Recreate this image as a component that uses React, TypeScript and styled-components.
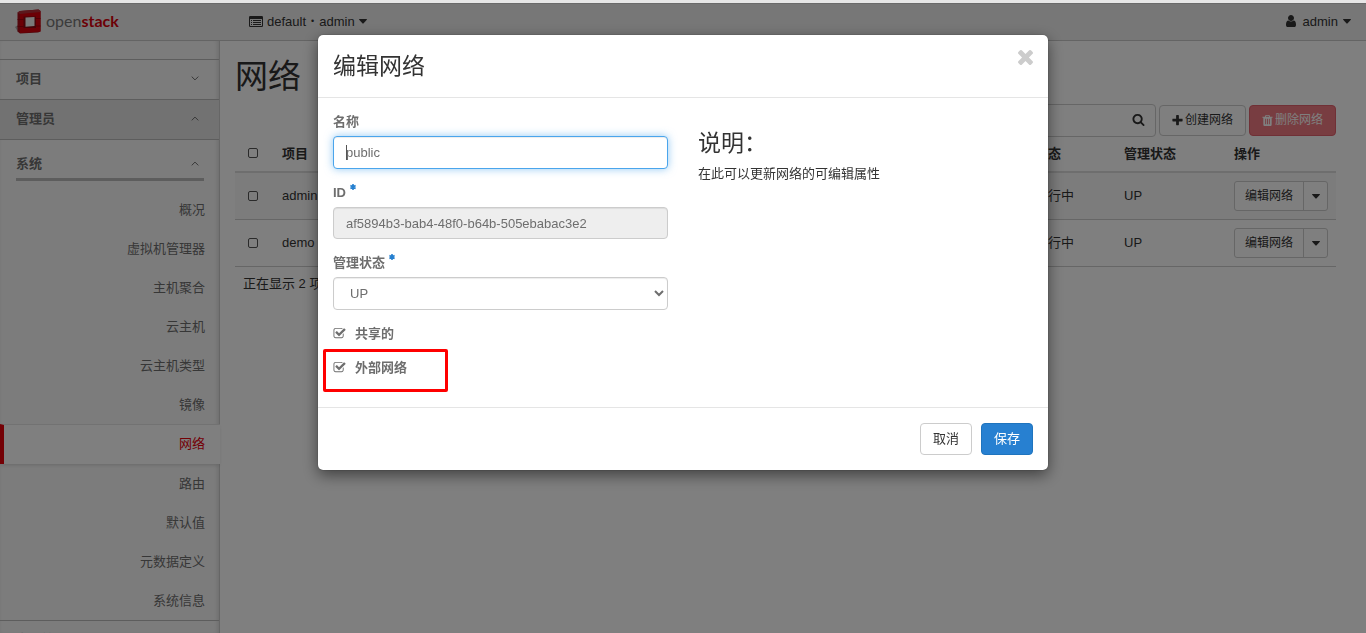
import React from 'react';
import styled, { createGlobalStyle, css } from 'styled-components';

const GlobalStyle = createGlobalStyle`
  *, *::before, *::after { box-sizing: border-box; }
  html, body { margin: 0; padding: 0; }
  body {
    overflow: hidden;
    background: #fff;
    color: #333;
    font-family: "Liberation Sans", "Noto Sans CJK SC", sans-serif;
    font-size: 13px;
    line-height: 19px;
  }
  button, input, select { font: inherit; color: inherit; }
  h1, h2, h3, p, ul { margin: 0; padding: 0; font-weight: 400; }
  ul { list-style: none; }
  a { color: inherit; text-decoration: none; }
`;

/* ---------- icons ---------- */

const glyphs = {
  check:
    'M1472 930v318q0 119-84.5 203.5t-203.5 84.5h-832q-119 0-203.5-84.5t-84.5-203.5v-832q0-119 84.5-203.5t203.5-84.5h832q63 0 117 25 15 7 18 23 3 17-9 29l-49 49q-10 10-23 10-3 0-9-2-23-6-45-6h-832q-66 0-113 47t-47 113v832q0 66 47 113t113 47h832q66 0 113-47t47-113v-254q0-13 9-22l64-64q10-10 23-10 6 0 12 3 20 8 20 29zm231-489l-814 814q-24 24-57 24t-57-24l-430-430q-24-24-24-57t24-57l110-110q24-24 57-24t57 24l263 263 647-647q24-24 57-24t57 24l110 110q24 24 24 57t-24 57z',
  times:
    'M1490 1322q0 40-28 68l-136 136q-28 28-68 28t-68-28l-294-294-294 294q-28 28-68 28t-68-28l-136-136q-28-28-28-68t28-68l294-294-294-294q-28-28-28-68t28-68l136-136q28-28 68-28t68 28l294 294 294-294q28-28 68-28t68 28l136 136q28 28 28 68t-28 68l-294 294 294 294q28 28 28 68z',
  search:
    'M1216 832q0-185-131.5-316.5t-316.5-131.5-316.5 131.5-131.5 316.5 131.5 316.5 316.5 131.5 316.5-131.5 131.5-316.5zm512 832q0 52-38 90t-90 38q-54 0-90-38l-343-342q-179 124-399 124-143 0-273.5-55.5t-225-150-150-225-55.5-273.5 55.5-273.5 150-225 225-150 273.5-55.5 273.5 55.5 225 150 150 225 55.5 273.5q0 220-124 399l343 343q37 37 37 90z',
  plus:
    'M1600 736v192q0 40-28 68t-68 28h-416v416q0 40-28 68t-68 28h-192q-40 0-68-28t-28-68v-416h-416q-40 0-68-28t-28-68v-192q0-40 28-68t68-28h416v-416q0-40 28-68t68-28h192q40 0 68 28t28 68v416h416q40 0 68 28t28 68z',
  user:
    'M1536 1399q0 109-62.5 187t-150.5 78h-854q-88 0-150.5-78t-62.5-187q0-85 8.5-160.5t31.5-152 58.5-131 94-89 134.5-34.5q131 128 313 128t313-128q76 0 134.5 34.5t94 89 58.5 131 31.5 152 8.5 160.5zm-256-887q0 159-112.5 271.5t-271.5 112.5-271.5-112.5-112.5-271.5 112.5-271.5 271.5-112.5 271.5 112.5 112.5 271.5z',
  trash:
    'M704 1376v-704q0-14-9-23t-23-9h-64q-14 0-23 9t-9 23v704q0 14 9 23t23 9h64q14 0 23-9t9-23zm256 0v-704q0-14-9-23t-23-9h-64q-14 0-23 9t-9 23v704q0 14 9 23t23 9h64q14 0 23-9t9-23zm256 0v-704q0-14-9-23t-23-9h-64q-14 0-23 9t-9 23v704q0 14 9 23t23 9h64q14 0 23-9t9-23zm-544-992h448l-48-117q-7-9-17-11h-317q-10 2-17 11zm928 32v64q0 14-9 23t-23 9h-96v948q0 83-47 143.5t-113 60.5h-832q-66 0-113-58.5t-47-141.5v-952h-96q-14 0-23-9t-9-23v-64q0-14 9-23t23-9h309l70-167q15-37 54-63t79-26h320q40 0 79 26t54 63l70 167h309q14 0 23 9t9 23z',
};

const Svg = styled.svg`
  display: block;
  flex: none;
  fill: currentColor;
`;

const Glyph = ({
  name,
  size = 13,
  box = '0 0 1792 1792',
}: {
  name: keyof typeof glyphs;
  size?: number;
  box?: string;
}) => (
  <Svg width={size} height={size} viewBox={box} aria-hidden="true">
    <path d={glyphs[name]} />
  </Svg>
);

const Caret = () => (
  <Svg width="8" height="5" viewBox="0 0 8 5" aria-hidden="true">
    <path d="M0.4 0h7.2q.6.2.2.8L4.4 4.4q-.4.3-.8 0L.2.8Q-.2.2.4 0z" />
  </Svg>
);

const Chevron = ({ up }: { up?: boolean }) => (
  <Svg width="8" height="5" viewBox="0 0 8 5" aria-hidden="true">
    <path d={up ? 'M0.7 4.4L4 1.1l3.3 3.3' : 'M0.7 0.6L4 3.9l3.3-3.3'} fill="none" stroke="currentColor" strokeWidth="1" />
  </Svg>
);

const ListIcon = () => (
  <Svg width="14" height="11" viewBox="0 0 14 11" aria-hidden="true">
    <path fillRule="evenodd" d="M1.2 0h11.6Q14 0 14 1.2v8.6q0 1.2-1.2 1.2H1.2Q0 11 0 9.800V1.2Q0 0 1.2 0zM1 3v6.6q0 .4.4.4h11.2q.4 0 .4-.4V3z" />
    <path d="M2 4h1v1H2zM4 4h8v1H4zM2 6h1v1H2zM4 6h8v1H4zM2 8h1v1H2zM4 8h8v1H4z" />
  </Svg>
);

const StarIcon = () => (
  <Svg width="6" height="6" viewBox="0 0 6 6" aria-hidden="true">
    <path d="M3 0v6M0.4 1.500l5.2 3M5.600 1.500L0.400 4.500" stroke="currentColor" strokeWidth="1.6" />
  </Svg>
);

const LogoMark = () => (
  <Svg width="27" height="25" viewBox="0 0 27 25" aria-hidden="true">
    <path d="M0 18l3-2v7z" fill="#aaa" />
    <path d="M2.500 3.500L5 2 23.500 0.500 25.500 2v20.500L23 23.500 5 24.500 2.500 22.500z" fill="#a80d18" />
    <path d="M5 4.500L25.500 2.500v20L5 24z" fill="#d8000c" />
    <path d="M2.500 3.500L5 2 23.500 0.500 25.500 2v1L5 5z" fill="#b8303a" />
    <path d="M8.500 7.500h12.500V19H8.500z" fill="#8c0a12" />
    <path d="M10.500 8.500L19.500 8v9l-9 .800z" fill="#f4f4f4" />
    <path d="M2.500 10.500h6M2.500 17.500h6M21 9.500h4.500M21 17h4.500" stroke="#98000a" strokeWidth="0.8" />
  </Svg>
);

/* ---------- page chrome ---------- */

const Page = styled.div`
  height: 100vh;
  overflow: hidden;
  display: flex;
  flex-direction: column;
`;

const TopStrip = styled.div`
  flex: none;
  height: 3px;
  background: #e6e6e6;
`;

const Navbar = styled.header`
  flex: none;
  display: flex;
  align-items: center;
  height: 38px;
  padding: 0 15px 2px;
  background: #eee;
  border-top: 1px solid #d4d4d4;
  border-bottom: 1px solid #c8c8c8;
`;

const Brand = styled.a`
  display: flex;
  align-items: center;
  gap: 4px;
  width: 234px;
  color: #777;
  font-family: Lato, sans-serif;
  font-size: 16px;
  line-height: 24px;

  strong { color: #d8000c; }
`;

const NavButton = styled.button<{ $end?: boolean }>`
  display: flex;
  align-items: center;
  gap: 4px;
  padding: 0;
  border: 0;
  background: none;
  ${(p) => p.$end && css`
    gap: 5px;
    margin-left: auto;
  `}
`;

const Dot = styled.span`
  margin: 0 1px;
  font-size: 9px;
`;

const Columns = styled.div`
  flex: 1;
  min-height: 0;
  display: flex;
`;

/* ---------- sidebar ---------- */

const Sidebar = styled.nav`
  flex: none;
  width: 220px;
  padding-top: 18px;
  background: #f9f9f9;
  border-right: 1px solid #ccc;
  box-shadow: inset -4px 0 5px -3px rgba(0, 0, 0, 0.14), inset 3px 0 4px -3px rgba(0, 0, 0, 0.06);
  color: #6e6e6e;
`;

const PanelToggle = styled.button<{ $open?: boolean }>`
  display: flex;
  align-items: center;
  justify-content: space-between;
  width: 100%;
  height: 40px;
  padding: 0 20px 2px 16px;
  border: 0;
  border-top: 1px solid #bbb;
  background: ${(p) => (p.$open ? '#e5e5e5' : 'transparent')};
  font-weight: 700;
`;

const Group = styled.div`
  padding-top: 10px;
  border-top: 1px solid #bbb;
`;

const GroupToggle = styled.button`
  display: flex;
  align-items: center;
  justify-content: space-between;
  width: 188px;
  height: 31px;
  margin: 0 15px 9px 16px;
  padding: 0 5px 2px 0;
  border: 0;
  border-bottom: 3px solid #bbb;
  background: none;
  font-weight: 700;
`;

const NavItem = styled.a<{ $active?: boolean }>`
  display: flex;
  align-items: center;
  justify-content: flex-end;
  height: 39px;
  padding-right: 14px;
  ${(p) =>
    p.$active &&
    css`
      height: 40px;
      margin-right: -1px;
      padding: 0 15px 2px 0;
      border-left: 4px solid #e8000b;
      border-top: 1px solid #e4e4e4;
      background: #fff;
      color: #e8000b;
      box-shadow: 0 2px 4px -1px rgba(0, 0, 0, 0.16);
    `}
`;

/* ---------- main content ---------- */

const Main = styled.main`
  flex: 1;
  min-width: 0;
  padding: 13px 30px 0 15px;
`;

const PageTitle = styled.h1`
  font-size: 33px;
  line-height: 46px;
`;

const Toolbar = styled.div`
  display: flex;
  justify-content: flex-end;
  gap: 3px;
  margin-top: 4px;
  height: 33px;
`;

const SearchBox = styled.div`
  display: flex;
  align-items: center;
  width: 300px;
  height: 33px;
  padding: 0 10px 2px 0;
  border: 1px solid #ccc;
  border-radius: 4px;

  input {
    flex: 1;
    min-width: 0;
    border: 0;
    background: none;
  }
  button {
    padding: 0;
    border: 0;
    background: none;
  }
`;

const ActionButton = styled.button<{ $danger?: boolean }>`
  display: flex;
  align-items: center;
  justify-content: center;
  gap: 1px;
  width: 87px;
  height: 31px;
  margin-top: 1px;
  padding: 0 1px 1px 0;
  border: 1px solid ${(p) => (p.$danger ? '#e0606c' : '#ccc')};
  border-radius: 4px;
  background: ${(p) => (p.$danger ? '#f07a82' : '#fff')};
  color: ${(p) => (p.$danger ? '#fff' : '#333')};
  font-size: 12px;
`;

const DataTable = styled.table`
  width: 100%;
  table-layout: fixed;
  border-collapse: separate;
  border-spacing: 0;

  th, td {
    padding: 0 8px 2px;
    text-align: left;
    white-space: nowrap;
  }
  th {
    height: 36px;
    border-bottom: 2px solid #ddd;
  }
  td {
    height: 47px;
    border-bottom: 1px solid #ccc;
  }
  td:first-child, td:last-child { padding-bottom: 0; }
  tbody tr:nth-child(odd) { background: #f9f9f9; }
`;

const Col = styled.col<{ $w?: number }>`
  ${(p) => p.$w && css`width: ${p.$w}px;`}
`;

const RowCheck = styled.input`
  appearance: none;
  display: block;
  width: 10px;
  height: 10px;
  margin: 0 5px;
  border: 1px solid #555;
  border-radius: 2px;
`;

const SplitButton = styled.div`
  display: flex;
  width: 94px;
  height: 30px;
  border: 1px solid #ccc;
  border-radius: 3px;
  background: #fff;

  button {
    display: flex;
    align-items: center;
    justify-content: center;
    padding: 0;
    border: 0;
    background: none;
    font-size: 12px;
  }
  button:first-child { flex: 1; }
  button:last-child {
    width: 24px;
    border-left: 1px solid #ccc;
  }
`;

const TableFooter = styled.p`
  padding: 7px 8px;
`;

/* ---------- modal ---------- */

const Backdrop = styled.div`
  position: fixed;
  inset: 3px 0 0;
  padding-top: 32px;
  background: rgba(0, 0, 0, 0.5);
`;

const Dialog = styled.form`
  width: 730px;
  max-width: 100%;
  margin: 0 auto;
  border-radius: 5px;
  background: #fff;
  box-shadow: 0 5px 15px rgba(0, 0, 0, 0.5), 0 0 1px rgba(0, 0, 0, 0.7);
`;

const DialogHeader = styled.header`
  display: flex;
  align-items: flex-start;
  justify-content: space-between;
  padding: 15px;
  border-bottom: 1px solid #e5e5e5;
`;

const Heading = styled.h2`
  font-size: 23px;
  line-height: 32px;
`;

const CloseButton = styled.button`
  padding: 0;
  border: 0;
  background: none;
  color: #ccc;
`;

const DialogBody = styled.div`
  display: grid;
  grid-template-columns: 1fr 1fr;
  gap: 30px;
  padding: 14px 15px 30px;
`;

const Fields = styled.div`
  display: flex;
  flex-direction: column;
  gap: 14px;
  color: #6e6e6e;
`;

const Field = styled.div`
  position: relative;
  display: flex;
  flex-direction: column;
  gap: 5px;
`;

const Label = styled.label`
  display: flex;
  align-items: flex-start;
  gap: 4px;
  font-weight: 700;

  svg {
    margin-top: 1px;
    color: #2680d0;
  }
`;

const control = css`
  width: 100%;
  height: 33px;
  padding: 0 12px;
  border: 1px solid #ccc;
  border-radius: 4px;
  outline: 0;
  background: #fff;
  box-shadow: inset 0 1px 1px rgba(0, 0, 0, 0.075);
`;

const TextInput = styled.input<{ $focused?: boolean }>`
  ${control}
  &:disabled {
    height: 32px;
    background: #eee;
    color: #6e6e6e;
  }
  ${(p) =>
    p.$focused &&
    css`
      border-color: #4aa5ec;
      box-shadow: inset 0 1px 1px rgba(0, 0, 0, 0.075), 0 0 8px rgba(74, 165, 236, 0.6);
    `}
`;

const TextCursor = styled.span`
  position: absolute;
  left: 13px;
  bottom: 9px;
  width: 1px;
  height: 15px;
  background: #555;
`;

const Select = styled.select`
  ${control}
`;

const Check = styled.label<{ $marked?: boolean }>`
  position: relative;
  display: flex;
  align-items: center;
  gap: 9px;
  font-weight: 700;

  ${(p) =>
    p.$marked &&
    css`
      margin-top: 1px;
      &::after {
        content: '';
        position: absolute;
        left: -10px;
        top: -9px;
        width: 125px;
        height: 43px;
        border: 3px solid #ff0000;
        border-radius: 2px;
      }
    `}
`;

const Tick = styled.span`
  display: grid;

  input, svg { grid-area: 1 / 1; }
  input {
    appearance: none;
    width: 13px;
    height: 13px;
    margin: 0;
  }
  input:not(:checked) + svg { visibility: hidden; }
`;

const Help = styled.section`
  padding-top: 15px;

  p { margin-top: 5px; }
`;

const DialogFooter = styled.footer`
  display: flex;
  justify-content: flex-end;
  gap: 9px;
  padding: 15px;
  border-top: 1px solid #e5e5e5;
`;

const Button = styled.button<{ $primary?: boolean }>`
  width: 52px;
  height: 32px;
  padding: 0 0 1px;
  border: 1px solid ${(p) => (p.$primary ? '#1f74be' : '#ccc')};
  border-radius: 4px;
  background: ${(p) => (p.$primary ? '#2780d1' : '#fff')};
  color: ${(p) => (p.$primary ? '#fff' : '#333')};
`;

const navItems = ['概况', '虚拟机管理器', '主机聚合', '云主机', '云主机类型', '镜像', '网络', '路由', '默认值', '元数据定义', '系统信息'];
const rows = ['admin', 'demo'];

export default function App() {
  return (
    <Page>
      <GlobalStyle />
      <TopStrip />
      <Navbar>
        <Brand href="#">
          <LogoMark />
          <span>open<strong>stack</strong></span>
        </Brand>
        <NavButton type="button">
          <ListIcon />
          <span>default</span>
          <Dot>•</Dot>
          <span>admin</span>
          <Caret />
        </NavButton>
        <NavButton type="button" $end>
          <Glyph name="user" size={14} />
          <span>admin</span>
          <Caret />
        </NavButton>
      </Navbar>

      <Columns>
        <Sidebar>
          <PanelToggle type="button">项目<Chevron /></PanelToggle>
          <PanelToggle type="button" $open>管理员<Chevron up /></PanelToggle>
          <Group>
            <GroupToggle type="button">系统<Chevron up /></GroupToggle>
            {navItems.map((item) => (
              <NavItem key={item} href="#" $active={item === '网络'}>{item}</NavItem>
            ))}
          </Group>
          <PanelToggle type="button">身份管理<Chevron /></PanelToggle>
        </Sidebar>

        <Main>
          <PageTitle>网络</PageTitle>
          <Toolbar>
            <SearchBox>
              <input type="search" aria-label="搜索" />
              <button type="button" aria-label="搜索"><Glyph name="search" /></button>
            </SearchBox>
            <ActionButton type="button"><Glyph name="plus" size={13} />创建网络</ActionButton>
            <ActionButton type="button" $danger><Glyph name="trash" size={13} />删除网络</ActionButton>
          </Toolbar>
          <DataTable>
            <colgroup>
              <Col $w={39} /><Col /><Col $w={89} /><Col $w={110} /><Col $w={110} />
            </colgroup>
            <thead>
              <tr>
                <th><RowCheck type="checkbox" aria-label="全选" /></th>
                <th>项目</th>
                <th>状态</th>
                <th>管理状态</th>
                <th>操作</th>
              </tr>
            </thead>
            <tbody>
              {rows.map((row) => (
                <tr key={row}>
                  <td><RowCheck type="checkbox" aria-label={row} /></td>
                  <td>{row}</td>
                  <td>运行中</td>
                  <td>UP</td>
                  <td>
                    <SplitButton>
                      <button type="button">编辑网络</button>
                      <button type="button" aria-label="更多操作"><Caret /></button>
                    </SplitButton>
                  </td>
                </tr>
              ))}
            </tbody>
          </DataTable>
          <TableFooter>正在显示 2 项</TableFooter>
        </Main>
      </Columns>

      <Backdrop>
        <Dialog role="dialog" aria-labelledby="dialog-title">
          <DialogHeader>
            <Heading id="dialog-title">编辑网络</Heading>
            <CloseButton type="button" aria-label="关闭">
              <Glyph name="times" size={15} box="302 366 1188 1188" />
            </CloseButton>
          </DialogHeader>
          <DialogBody>
            <Fields>
              <Field>
                <Label htmlFor="name">名称</Label>
                <TextInput id="name" defaultValue="public" $focused />
                <TextCursor />
              </Field>
              <Field>
                <Label htmlFor="network-id">ID<StarIcon /></Label>
                <TextInput id="network-id" defaultValue="af5894b3-bab4-48f0-b64b-505ebabac3e2" disabled />
              </Field>
              <Field>
                <Label htmlFor="admin-state">管理状态<StarIcon /></Label>
                <Select id="admin-state" defaultValue="UP">
                  <option>UP</option>
                </Select>
              </Field>
              <Check>
                <Tick><input type="checkbox" defaultChecked /><Glyph name="check" /></Tick>
                共享的
              </Check>
              <Check $marked>
                <Tick><input type="checkbox" defaultChecked /><Glyph name="check" /></Tick>
                外部网络
              </Check>
            </Fields>
            <Help>
              <Heading>说明：</Heading>
              <p>在此可以更新网络的可编辑属性</p>
            </Help>
          </DialogBody>
          <DialogFooter>
            <Button type="button">取消</Button>
            <Button type="submit" $primary>保存</Button>
          </DialogFooter>
        </Dialog>
      </Backdrop>
    </Page>
  );
}
